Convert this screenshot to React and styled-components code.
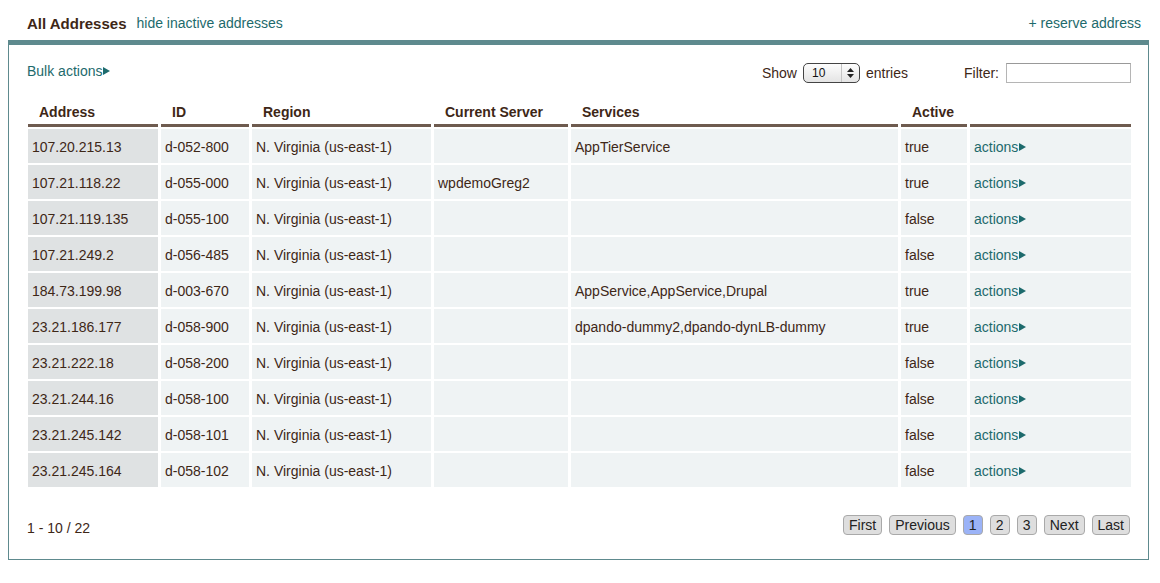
import React from 'react'
import styled, { createGlobalStyle } from 'styled-components'

const GlobalStyle = createGlobalStyle`
  body {
    margin: 0;
    background: #fff;
    font-family: "Liberation Sans", Arial, sans-serif;
    font-size: 14px;
    color: #3e2717;
  }
`

const Page = styled.div`
  width: 1160px;
  height: 583px;
`

const TitleBar = styled.div`
  display: flex;
  align-items: center;
  height: 18px;
  padding: 14px 19px 8px 27px;

  h1 {
    margin: 0 10px 0 0;
    font-size: 15px;
    font-weight: bold;
    color: #3e2717;
  }

  .spacer {
    flex: 1;
  }
`

const Link = styled.a`
  color: #1d6a6c;
  text-decoration: none;
  cursor: pointer;
  white-space: nowrap;
  display: inline-flex;
  align-items: center;
`

const Panel = styled.div`
  margin: 0 11px 0 8px;
  border: 1px solid #5e8a8e;
  border-top: 5px solid #5e8a8e;
  padding: 17px 17px 23px 18px;
`

const Toolbar = styled.div`
  display: flex;
  align-items: center;
  height: 22px;
  margin-bottom: 14px;

  .spacer {
    flex: 1;
  }
`

const BulkLink = styled(Link)`
  margin-top: -4px;
`

const Arrow = () => (
  <svg width='7' height='8' viewBox='0 0 7 8' style={{ marginLeft: 1 }}>
    <polygon points='0,0 7,4 0,8' fill='#1d6a6c' />
  </svg>
)

const Label = styled.span`
  color: #3e2717;
`

const FakeSelect = styled.div`
  display: flex;
  align-items: stretch;
  width: 55px;
  height: 18px;
  margin: 0 6px 0 6px;
  border: 1px solid #444;
  border-radius: 5px;
  background: linear-gradient(#fdfdfd, #e4e4e4);
  font-size: 12px;
  color: #111;

  .value {
    flex: 1;
    padding-left: 8px;
    line-height: 18px;
  }

  .arrows {
    width: 17px;
    border-left: 1px solid #c4c4c4;
    display: flex;
    align-items: center;
    justify-content: center;
  }
`

const FilterInput = styled.input`
  width: 121px;
  height: 16px;
  margin: 0 0 0 7px;
  padding: 1px;
  border: 1px solid #b5b5b5;
  border-top-color: #999;
  font-family: inherit;
  font-size: 13px;
`

const FilterLabel = styled(Label)`
  margin-left: 56px;
`

const Table = styled.table`
  border-collapse: separate;
  border-spacing: 3px 2px;
  table-layout: fixed;
  width: 1109px;
  margin-left: -2px;
`

const Th = styled.th`
  text-align: left;
  font-weight: bold;
  font-size: 14px;
  line-height: 17px;
  padding: 4px 0 3px 11px;
  border-bottom: 3px solid #6e5b4f;
  color: #3e2717;
  white-space: nowrap;
`

const Td = styled.td`
  height: 32px;
  padding: 2px 0 0 4px;
  background: ${props => (props.$key ? '#dfe2e3' : '#eff3f4')};
  white-space: nowrap;
  overflow: hidden;
  line-height: 17px;
`

const Footer = styled.div`
  display: flex;
  align-items: center;
  justify-content: space-between;
  height: 22px;
  margin-top: 25px;
`

const FooterInfo = styled(Label)`
  margin-top: 5px;
`

const Pager = styled.div`
  display: flex;
  gap: 7px;
  margin-right: 1px;
`

const PageButton = styled.button`
  height: 20px;
  padding: 0 5px;
  min-width: 20px;
  border: 1px solid #a9a9a9;
  border-radius: 4px;
  background: ${props => (props.$active ? '#9bb3f7' : '#dedede')};
  font-family: "Liberation Sans", Arial, sans-serif;
  font-size: 14px;
  line-height: 18px;
  color: #222;
  cursor: pointer;
`

const rows = [
  ['107.20.215.13', 'd-052-800', '', 'AppTierService', 'true'],
  ['107.21.118.22', 'd-055-000', 'wpdemoGreg2', '', 'true'],
  ['107.21.119.135', 'd-055-100', '', '', 'false'],
  ['107.21.249.2', 'd-056-485', '', '', 'false'],
  ['184.73.199.98', 'd-003-670', '', 'AppService,AppService,Drupal', 'true'],
  ['23.21.186.177', 'd-058-900', '', 'dpando-dummy2,dpando-dynLB-dummy', 'true'],
  ['23.21.222.18', 'd-058-200', '', '', 'false'],
  ['23.21.244.16', 'd-058-100', '', '', 'false'],
  ['23.21.245.142', 'd-058-101', '', '', 'false'],
  ['23.21.245.164', 'd-058-102', '', '', 'false']
]

const widths = [130, 88, 179, 134, 327, 66, 161]
const headers = ['Address', 'ID', 'Region', 'Current Server', 'Services', 'Active', '']

function App () {
  return (
    <Page>
      <GlobalStyle />
      <TitleBar>
        <h1>All Addresses</h1>
        <Link>hide inactive addresses</Link>
        <span className='spacer' />
        <Link>+ reserve address</Link>
      </TitleBar>
      <Panel>
        <Toolbar>
          <BulkLink>Bulk actions<Arrow /></BulkLink>
          <span className='spacer' />
          <Label>Show</Label>
          <FakeSelect>
            <span className='value'>10</span>
            <span className='arrows'>
              <svg width='7' height='10' viewBox='0 0 7 10'>
                <polygon points='3.5,0 7,4 0,4' fill='#222' />
                <polygon points='0,6 7,6 3.5,10' fill='#222' />
              </svg>
            </span>
          </FakeSelect>
          <Label>entries</Label>
          <FilterLabel>Filter:</FilterLabel>
          <FilterInput type='text' />
        </Toolbar>
        <Table>
          <colgroup>
            {widths.map((w, i) => <col key={i} style={{ width: w }} />)}
          </colgroup>
          <thead>
            <tr>
              {headers.map((h, i) => <Th key={i}>{h}</Th>)}
            </tr>
          </thead>
          <tbody>
            {rows.map(r => (
              <tr key={r[0]}>
                <Td $key>{r[0]}</Td>
                <Td>{r[1]}</Td>
                <Td>N. Virginia (us-east-1)</Td>
                <Td>{r[2]}</Td>
                <Td>{r[3]}</Td>
                <Td>{r[4]}</Td>
                <Td><Link>actions<Arrow /></Link></Td>
              </tr>
            ))}
          </tbody>
        </Table>
        <Footer>
          <FooterInfo>1 - 10 / 22</FooterInfo>
          <Pager>
            <PageButton>First</PageButton>
            <PageButton>Previous</PageButton>
            <PageButton $active>1</PageButton>
            <PageButton>2</PageButton>
            <PageButton>3</PageButton>
            <PageButton>Next</PageButton>
            <PageButton>Last</PageButton>
          </Pager>
        </Footer>
      </Panel>
    </Page>
  )
}

export default App
